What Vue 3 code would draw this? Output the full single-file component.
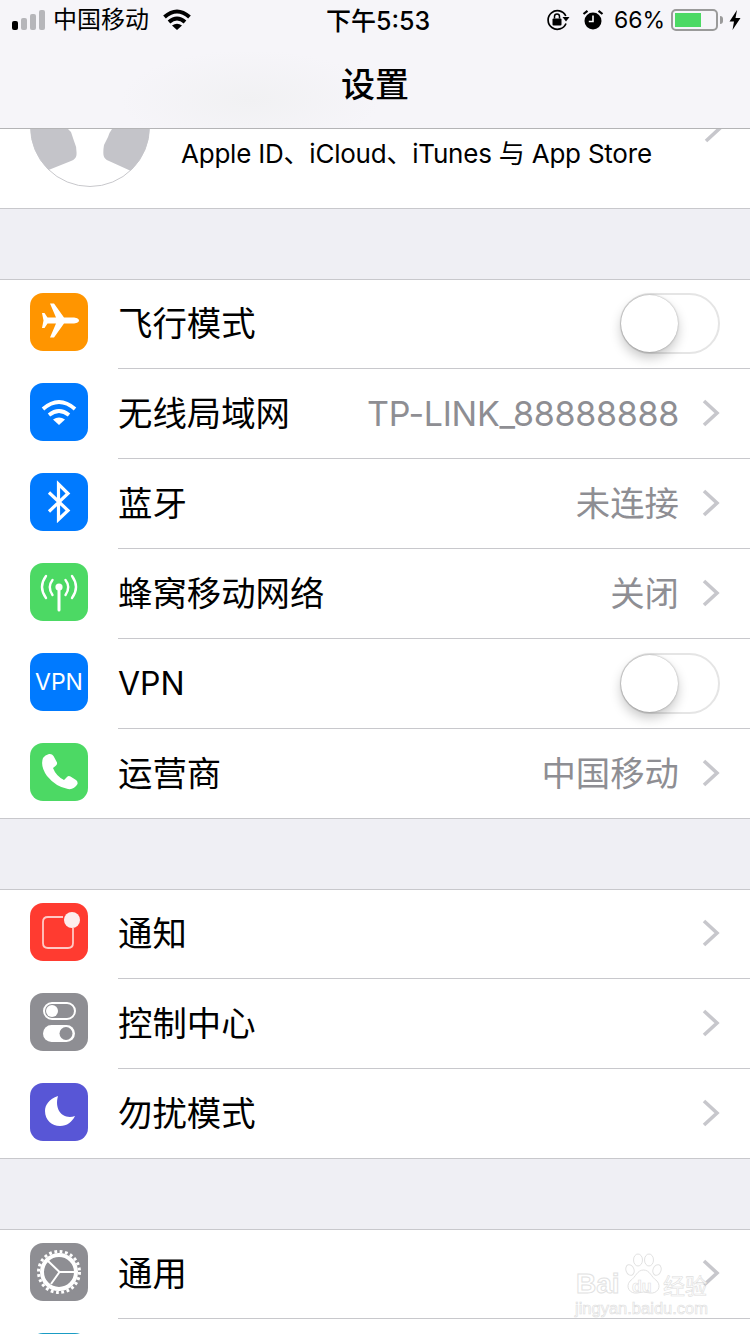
<script setup>
const groups = [
  [
    { id: 'plane', label: '飞行模式', color: '#ff9500', toggle: true },
    { id: 'wifi', label: '无线局域网', color: '#007aff', value: 'TP-LINK_88888888', chevron: true },
    { id: 'bluetooth', label: '蓝牙', color: '#007aff', value: '未连接', chevron: true },
    { id: 'cellular', label: '蜂窝移动网络', color: '#4cd964', value: '关闭', chevron: true },
    { id: 'vpn', label: 'VPN', color: '#007aff', toggle: true },
    { id: 'phone', label: '运营商', color: '#4cd964', value: '中国移动', chevron: true },
  ],
  [
    { id: 'notify', label: '通知', color: '#ff3b30', chevron: true },
    { id: 'control', label: '控制中心', color: '#8e8e93', chevron: true },
    { id: 'moon', label: '勿扰模式', color: '#5856d6', chevron: true },
  ],
  [
    { id: 'gear', label: '通用', color: '#8e8e93', chevron: true },
    { id: 'next', label: '', color: '#1a9cc4' },
  ],
]

// chinese glyphs sit a bit low next to latin ones in this font stack
const textClass = (text) => (/^[\x00-\x7f]*$/.test(text) ? 'latin' : 'cjk')
</script>

<template>
  <div class="phone">
    <header class="nav">
      <div class="status">
        <div class="status-left">
          <div class="signal">
            <i class="bar on b1"></i><i class="bar b2"></i><i class="bar b3"></i><i class="bar b4"></i>
          </div>
          <span class="carrier">中国移动</span>
          <svg class="st-wifi" width="28" height="22" viewBox="0 0 28 22">
            <path d="M1.500 8 Q14 -3 26.500 8" fill="none" stroke="#000" stroke-width="4" />
            <path d="M6 13 Q14 6 22 13" fill="none" stroke="#000" stroke-width="4" />
            <path d="M14 21 L9 16.500 Q14 13 19 16.500 Z" fill="#000" />
          </svg>
        </div>
        <span class="time">下午5:53</span>
        <div class="status-right">
          <svg class="st-lock" width="24" height="22" viewBox="0 0 24 22">
            <path d="M20 14.500 A9.300 9.300 0 1 1 19.800 7" fill="none" stroke="#000" stroke-width="1.700" />
            <path d="M16.500 8 H23.500 L20 12.500 Z" fill="#000" />
            <rect x="6.500" y="9.500" width="9" height="7" rx="1" fill="#000" />
            <path d="M8.500 9.500 V7.500 A2.500 2.500 0 0 1 13.500 7.500 V9.500" fill="none" stroke="#000" stroke-width="1.500" />
          </svg>
          <svg class="st-alarm" width="22" height="22" viewBox="0 0 22 22">
            <circle cx="11" cy="12" r="8.500" fill="#000" />
            <path d="M11 6.500 V12.500 H6.800" fill="none" stroke="#fff" stroke-width="1.600" />
            <path d="M1.500 5 L5.500 1.800 M20.500 5 L16.500 1.800" stroke="#000" stroke-width="2.200" />
          </svg>
          <span class="percent">66%</span>
          <div class="battery"><div class="battery-fill" :style="{ width: '66%' }"></div></div>
          <i class="battery-nub"></i>
          <svg class="st-bolt" width="12" height="20" viewBox="0 0 12 20">
            <path d="M8 0 L0.500 11.500 H5 L3.500 20 L11.500 8 H6.500 Z" fill="#000" />
          </svg>
        </div>
      </div>
      <h1 class="title">设置</h1>
    </header>

    <section class="profile">
      <svg class="avatar" width="120" height="120" viewBox="0 0 120 120">
        <defs>
          <clipPath id="avatar-clip"><circle cx="60" cy="60" r="59.500" /></clipPath>
        </defs>
        <circle cx="60" cy="60" r="59.500" fill="#fff" stroke="#c8c8cc" stroke-width="1" />
        <g clip-path="url(#avatar-clip)" fill="#c4c4c9">
          <path d="M0 0 H38 V62 Q41 64 42 68 L44 74 Q47 80 46.500 88 Q46 92 41 94 L16 104 L0 90 Z" />
          <path d="M120 0 H82 V62 Q79 66 78 70 L74 78 Q73 84 73.500 88 Q74 92 79 94 L101 104 L120 90 Z" />
        </g>
      </svg>
      <p class="profile-text">Apple ID、iCloud、iTunes 与 App Store</p>
      <svg class="profile-chevron" width="18" height="28" viewBox="0 0 18 28">
        <path d="M2 2 L15 14 L2 26" fill="none" stroke="#c7c7cc" stroke-width="3.600" />
      </svg>
    </section>

    <section v-for="(group, g) in groups" :key="g" class="group">
      <div v-for="row in group" :key="row.id" class="row">
        <div class="icon" :style="{ background: row.color }">
          <svg v-if="row.id === 'plane'" width="58" height="58" viewBox="0 0 58 58">
            <path d="M49 27.500 C49 25.500 46 24.500 43 24.500 H34 L24 10.500 H20 L26 24.500 H17.500 L14.500 20 H12 L13.500 27.500 L12 35 H14.500 L17.500 30.500 H26 L20 44.500 H24 L34 30.500 H43 C46 30.500 49 29.500 49 27.500 Z" fill="#fff" />
          </svg>
          <svg v-else-if="row.id === 'wifi'" width="58" height="58" viewBox="0 0 58 58">
            <path d="M13 26 Q29 12 45 26" fill="none" stroke="#fff" stroke-width="3.800" />
            <path d="M19 32 Q29 24 39 32" fill="none" stroke="#fff" stroke-width="3.800" />
            <path d="M29 42 L23 36.500 Q29 32.500 35 36.500 Z" fill="#fff" />
          </svg>
          <svg v-else-if="row.id === 'bluetooth'" width="58" height="58" viewBox="0 0 58 58">
            <path d="M19 19.500 L38 37.500 L28.500 46.500 V11 L38 20.500 L19 38.500" fill="none" stroke="#fff" stroke-width="3.200" />
          </svg>
          <svg v-else-if="row.id === 'cellular'" width="58" height="58" viewBox="0 0 58 58">
            <circle cx="29" cy="24" r="3.600" fill="#fff" />
            <path d="M29 25 V47" stroke="#fff" stroke-width="3" stroke-linecap="round" />
            <g fill="none" stroke="#fff" stroke-width="2.400" stroke-linecap="round">
              <path d="M22.500 17 Q17 24 22.500 32" />
              <path d="M35.500 17 Q41 24 35.500 32" />
              <path d="M16 13 Q8 24 16 35" />
              <path d="M42 13 Q50 24 42 35" />
            </g>
          </svg>
          <span v-else-if="row.id === 'vpn'" class="vpn-text">VPN</span>
          <svg v-else-if="row.id === 'phone'" width="58" height="58" viewBox="0 0 58 58">
            <path d="M19 11 Q22 10.500 23.500 13 L27 19.500 Q27.500 21.500 25.500 23 L23 25 Q26 33 34 37 L37 34 Q38.500 32.500 40.500 33.500 L46 37 Q48 38.500 47.500 41 Q44 47 38 46 Q26 44 17 33 Q10 23 13 15 Q15 12 19 11 Z" fill="#fff" />
          </svg>
          <svg v-else-if="row.id === 'notify'" width="58" height="58" viewBox="0 0 58 58">
            <path d="M33 14 H18 Q13 14 13 19 V40 Q13 45 18 45 H38 Q43 45 43 40 V25" fill="none" stroke="#ffc9c5" stroke-width="1.800" />
            <circle cx="42" cy="17" r="8" fill="#fdeeed" />
          </svg>
          <svg v-else-if="row.id === 'control'" width="58" height="58" viewBox="0 0 58 58">
            <rect x="14" y="10" width="31" height="16" rx="8" fill="none" stroke="#fff" stroke-width="2" />
            <circle cx="22" cy="18" r="6" fill="#fff" />
            <rect x="13" y="32" width="32" height="17" rx="8.500" fill="#fff" />
            <circle cx="36" cy="40.500" r="6.500" fill="#8e8e93" />
          </svg>
          <svg v-else-if="row.id === 'moon'" width="58" height="58" viewBox="0 0 58 58">
            <path d="M28 13 C19 16 15 22 15 28 C15 37 22 43 30 43 C37 43 42 39 45 33 C33 37 24 27 28 13 Z" fill="#fff" />
          </svg>
          <svg v-else-if="row.id === 'gear'" width="58" height="58" viewBox="0 0 58 58">
            <circle cx="29" cy="29" r="20.500" fill="none" stroke="#fff" stroke-width="3" stroke-dasharray="2.800 2.570" />
            <circle cx="29" cy="29" r="17" fill="none" stroke="#fff" stroke-width="4" />
            <path d="M29.500 29 L17 17 M29.500 29 H45 M29.500 29 L21 41" fill="none" stroke="#fff" stroke-width="2" />
          </svg>
        </div>
        <div class="row-body">
          <span class="label" :class="textClass(row.label)">{{ row.label }}</span>
          <span v-if="row.value" class="value" :class="textClass(row.value)">{{ row.value }}</span>
          <div v-if="row.toggle" class="toggle"><i class="knob"></i></div>
          <svg v-if="row.chevron" class="chevron" width="18" height="28" viewBox="0 0 18 28">
            <path d="M2 2 L15 14 L2 26" fill="none" stroke="#c7c7cc" stroke-width="3.600" />
          </svg>
        </div>
      </div>
    </section>

    <div class="watermark">
      <svg class="paw" width="37" height="42" viewBox="0 0 37 42">
        <g fill="#fff" stroke="#e2e2e2" stroke-width="1">
          <ellipse cx="5" cy="17" rx="4" ry="5.500" transform="rotate(-20 5 17)" />
          <ellipse cx="13" cy="7" rx="4.500" ry="6" />
          <ellipse cx="24" cy="7" rx="4.500" ry="6" />
          <ellipse cx="32" cy="17" rx="4" ry="5.500" transform="rotate(20 32 17)" />
          <path d="M18.500 17 C25 17 26 24 32 28 C37 34 32 41 25 40 Q18.500 38 12 40 C5 41 0 34 5 28 C11 24 12 17 18.500 17 Z" />
        </g>
      </svg>
      <span class="wm-bai">Bai</span>
      <span class="wm-du">du</span>
      <span class="wm-cn">经验</span>
      <span class="wm-url">jingyan.baidu.com</span>
    </div>
  </div>
</template>

<style>
html,
body {
  margin: 0;
  background: #efeff4;
}
</style>

<style scoped>
.phone {
  position: relative;
  width: 750px;
  height: 1334px;
  overflow: hidden;
  background: #efeff4;
  color: #000;
  font-family: Inter, "Noto Sans CJK SC", sans-serif;
}

.nav {
  position: relative;
  z-index: 2;
  height: 128px;
  border-bottom: 1px solid #b4b4b6;
  background: radial-gradient(ellipse 130px 50px at 250px 100px, #f1f1f3, #f6f5f9 100%);
}

.status {
  position: relative;
  display: flex;
  justify-content: space-between;
  align-items: center;
  height: 40px;
  font-size: 24px;
}

.status-left,
.status-right {
  display: flex;
  align-items: center;
}

.status-left {
  margin-left: 12px;
}

.signal {
  display: flex;
  align-items: flex-end;
  gap: 3px;
  height: 20px;
}

.bar {
  display: block;
  width: 6px;
  border-radius: 2px;
  background: #b6b6ba;
}

.bar.on {
  background: #000;
}

.b1 { height: 9px; }
.b2 { height: 12px; }
.b3 { height: 16px; }
.b4 { height: 20px; }

.carrier {
  margin-left: 8px;
  padding-bottom: 6px;
}

.st-wifi {
  margin-left: 14px;
}

.time {
  position: absolute;
  left: 326px;
  top: 0;
  font-size: 25px;
  font-weight: 500;
  line-height: 42px;
}

.status-right {
  margin-right: 9px;
}

.percent {
  margin-left: 10px;
  font-size: 23px;
}

.st-alarm {
  margin-left: 12px;
}

.battery {
  box-sizing: border-box;
  width: 47px;
  height: 22px;
  margin-left: 6px;
  padding: 2px;
  border: 2px solid #9a9a9a;
  border-radius: 5px;
}

.battery-fill {
  height: 100%;
  background: #4cd964;
}

.battery-nub {
  width: 3px;
  height: 8px;
  margin-left: 2px;
  border-radius: 0 3px 3px 0;
  background: #9a9a9a;
}

.st-bolt {
  margin-left: 6px;
}

.title {
  margin: 21px 0 0;
  font-size: 34px;
  font-weight: 500;
  line-height: 48px;
  text-align: center;
}

.profile {
  position: relative;
  display: flex;
  height: 79px;
  overflow: hidden;
  border-bottom: 1px solid #c8c8cc;
  background: #fff;
}

.avatar {
  flex: none;
  margin: -62px 0 0 30px;
}

.profile-text {
  margin: 7px 0 0 31px;
  font-size: 26px;
  line-height: 36px;
  letter-spacing: -0.22px;
  white-space: nowrap;
}

.profile-chevron {
  position: absolute;
  left: 704px;
  top: -14px;
}

.group {
  margin-top: 70px;
  border-top: 1px solid #c8c8cc;
  background: #fff;
}

.row {
  display: flex;
  height: 90px;
}

.row:last-child {
  height: 88px;
  border-bottom: 1px solid #c8c8cc;
}

.icon {
  flex: none;
  display: flex;
  align-items: center;
  justify-content: center;
  width: 58px;
  height: 58px;
  margin: 13px 30px 0;
  border-radius: 13px;
}

.vpn-text {
  color: #fff;
  font-size: 23px;
}

.row-body {
  flex: 1;
  display: flex;
  align-items: center;
  box-sizing: border-box;
  height: 89px;
  padding: 0 30px 2px 0;
  border-bottom: 1px solid #c8c8cc;
}

.row:last-child .row-body {
  height: 88px;
  border-bottom: none;
}

.label {
  flex: 1;
  font-size: 34.400px;
  white-space: nowrap;
}

.label.latin {
  font-size: 32px;
}

.value {
  color: #8e8e93;
  font-size: 34.400px;
  white-space: nowrap;
}

.value.latin {
  font-size: 34px;
  letter-spacing: -0.3px;
}

.cjk {
  padding-bottom: 4px;
}

.chevron {
  flex: none;
  margin-left: 23px;
}

.toggle {
  position: relative;
  box-sizing: border-box;
  width: 100px;
  height: 61px;
  margin-top: 1px;
  border: 2px solid #e5e5e5;
  border-radius: 31px;
}

.knob {
  position: absolute;
  left: -1px;
  top: 0;
  width: 57px;
  height: 57px;
  border-radius: 50%;
  background: #fff;
  box-shadow: 0 6px 12px rgba(0, 0, 0, 0.22), 0 0 2px rgba(0, 0, 0, 0.35);
}

.watermark {
  position: absolute;
  left: 575px;
  top: 1253px;
  width: 134px;
  height: 64px;
  color: #fff;
  font-family: "Liberation Sans", sans-serif;
  pointer-events: none;
}

.paw {
  position: absolute;
  left: 50px;
  top: 0;
}

.watermark span {
  position: absolute;
  white-space: nowrap;
}

.wm-bai {
  left: 1px;
  top: 18px;
  font-size: 28px;
  font-weight: 700;
  line-height: 26px;
  -webkit-text-stroke: 1px #e2e2e2;
}

.wm-du {
  left: 57px;
  top: 27px;
  font-size: 16px;
  font-weight: 700;
  line-height: 14px;
  -webkit-text-stroke: 0.6px #dedede;
}

.wm-cn {
  left: 88px;
  top: 19px;
  font-family: "Noto Sans CJK SC", sans-serif;
  font-size: 22px;
  line-height: 24px;
  -webkit-text-stroke: 0.6px #dedede;
}

.wm-url {
  left: 0;
  top: 46px;
  font-size: 16.500px;
  line-height: 18px;
  -webkit-text-stroke: 0.6px #dcdcdc;
}
</style>
